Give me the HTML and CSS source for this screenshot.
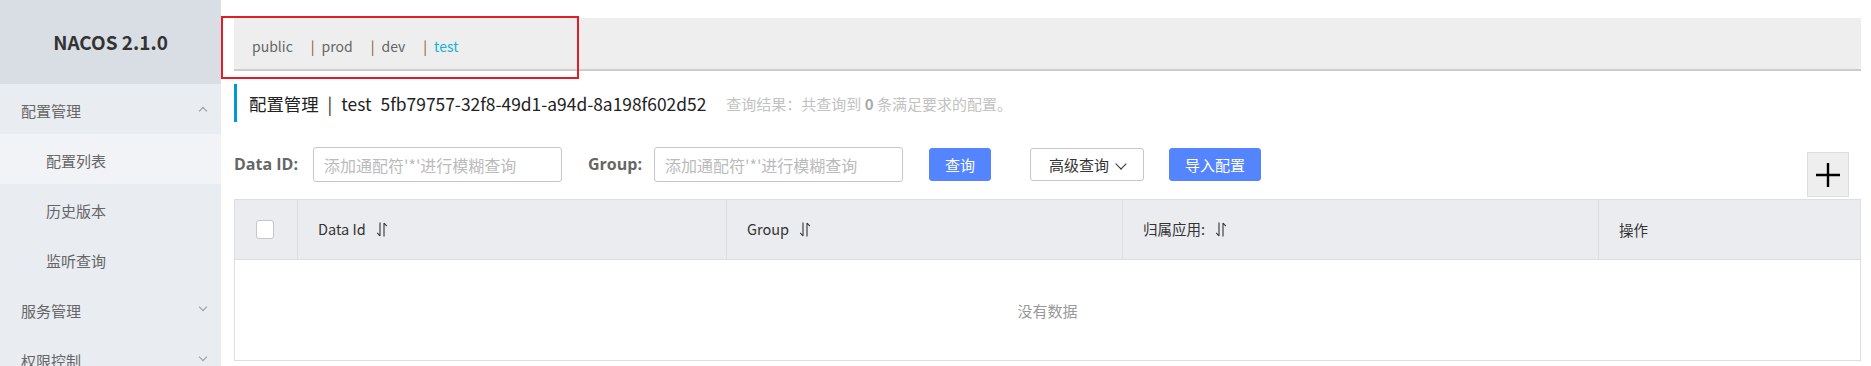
FILE: index.html
```html
<!DOCTYPE html>
<html>

<head>
    <meta charset="utf-8" />
    <title>Nacos 配置列表</title>
    <link rel="stylesheet" href="styles.css">
</head>

<body>
    <div class="page">
        <!-- 左侧菜单 -->
        <div class="side">
            <div class="logo">NACOS 2.1.0</div>
            <ul class="menu">
                <li class="menu_item open">配置管理<i class="arrow up"></i></li>
                <li class="sub_item active">配置列表</li>
                <li class="sub_item">历史版本</li>
                <li class="sub_item">监听查询</li>
                <li class="menu_item">服务管理<i class="arrow"></i></li>
                <li class="menu_item">权限控制<i class="arrow"></i></li>
            </ul>
        </div>

        <div class="main">
            <!-- 命名空间 -->
            <div class="ns_bar">
                <span class="ns">public</span>
                <span class="ns"><b>|</b>prod</span>
                <span class="ns"><b>|</b>dev</span>
                <span class="ns current"><b>|</b>test</span>
            </div>
            <div class="mark"></div>

            <div class="title">
                <span>配置管理</span>
                <span class="sep">|</span>
                <span>test</span>
                <span class="ns_id">5fb79757-32f8-49d1-a94d-8a198f602d52</span>
                <span class="hint">查询结果：共查询到 <strong>0</strong> 条满足要求的配置。</span>
            </div>

            <div class="search">
                <label class="label label_id">Data ID:</label>
                <input class="input" type="text" placeholder="添加通配符'*'进行模糊查询">
                <label class="label label_group">Group:</label>
                <input class="input" type="text" placeholder="添加通配符'*'进行模糊查询">
                <button class="btn primary btn_query">查询</button>
                <button class="btn normal">高级查询<i class="down"></i></button>
                <button class="btn primary">导入配置</button>
                <button class="btn_add">
                    <svg width="26" height="26" viewBox="0 0 26 26">
                        <path d="M13 1v24M1 13h24" stroke="#000" stroke-width="2.4" fill="none" />
                    </svg>
                </button>
            </div>

            <table class="table">
                <thead>
                    <tr>
                        <th class="col_check"><span class="checkbox"></span></th>
                        <th class="col_id">Data Id<i class="sort"></i></th>
                        <th class="col_group">Group<i class="sort"></i></th>
                        <th class="col_app">归属应用:<i class="sort"></i></th>
                        <th>操作</th>
                    </tr>
                </thead>
                <tbody>
                    <tr>
                        <td class="empty" colspan="5">没有数据</td>
                    </tr>
                </tbody>
            </table>
        </div>
    </div>

    <script>
        //排序图标
        let sorts = document.querySelectorAll('.sort')
        for (let i = 0; i < sorts.length; i++) {
            sorts[i].innerHTML = '<svg width="12" height="15" viewBox="0 0 12 15">' +
                '<path d="M4 0.5v13.5M4 14L1.2 10.8M8 14.5V1M8 1l2.8 3.2" stroke="#333" stroke-width="1.1" fill="none"/></svg>'
        }
    </script>
</body>

</html>
```

FILE: styles.css
```css
* {
    margin: 0;
    padding: 0;
    box-sizing: border-box;
}

body {
    font-family: "Noto Sans CJK SC", Roboto, sans-serif;
    color: #333;
    background: #fff;
    width: 1871px;
    height: 366px;
    overflow: hidden;
}

li {
    list-style: none;
}

.page {
    display: flex;
    height: 366px;
}

/* 左侧菜单 */
.side {
    width: 221px;
    flex-shrink: 0;
    background: #e9ecf1;
}

.logo {
    height: 84px;
    line-height: 83px;
    text-align: center;
    background: #d9dee5;
    font-size: 19px;
    font-weight: bold;
    color: #333;
}

.menu_item,
.sub_item {
    height: 50px;
    padding-top: 3px;
    line-height: 47px;
    font-size: 15px;
    color: #666;
    position: relative;
}

.menu_item {
    padding-left: 21px;
}

.sub_item {
    padding-left: 46px;
}

.sub_item.active {
    background: #f1f3f6;
}

.arrow {
    position: absolute;
    right: 15px;
    top: 20px;
    width: 6px;
    height: 6px;
    border-right: 1px solid #999;
    border-bottom: 1px solid #999;
    transform: rotate(45deg);
}

.arrow.up {
    top: 24px;
    transform: rotate(-135deg);
}

/* 主体 */
.main {
    flex: 1;
    padding: 18px 10px 0 13px;
    position: relative;
}

.ns_bar {
    height: 53px;
    background: #eee;
    border-bottom: 2px solid #ccc;
    padding: 5px 0 0 18px;
    display: flex;
    align-items: center;
    font-size: 14px;
    color: #666;
}

.ns {
    margin-right: 18px;
}

.ns b {
    font-weight: normal;
    color: #7a5a30;
    margin-right: 7px;
}

.ns.current {
    color: #1ab1d6;
}

/* 截图标注框 */
.mark {
    position: absolute;
    left: 0;
    top: 16px;
    width: 358px;
    height: 63px;
    border: 2px solid #e31d27;
}

.title {
    margin-top: 13px;
    height: 38px;
    border-left: 3px solid #0099d4;
    padding-left: 12px;
    display: flex;
    align-items: center;
    font-size: 17.4px;
    color: #222;
}

.title .sep {
    margin: 0 9px;
}

.title .ns_id {
    margin-left: 9px;
}

.hint {
    margin-left: 20px;
    font-size: 15px;
    color: #c2c2c2;
}

.hint strong {
    color: #aaa;
}

/* 搜索栏 */
.search {
    height: 52px;
    margin-top: 25px;
    display: flex;
    align-items: flex-start;
}

.label {
    flex-shrink: 0;
    font-family: "Open Sans", "Noto Sans CJK SC", sans-serif;
    font-size: 16px;
    font-weight: bold;
    color: #666;
    line-height: 35px;
}

.label_id {
    width: 79px;
}

.label_group {
    width: 66px;
}

.input {
    flex-shrink: 0;
    width: 249px;
    height: 35px;
    border: 1px solid #c4c6cf;
    border-radius: 3px;
    padding: 0 10px;
    font-size: 16px;
    font-family: inherit;
    margin-right: 26px;
    outline: none;
}

.input::placeholder {
    color: #bbb;
}

.btn {
    flex-shrink: 0;
    height: 33px;
    margin-top: 1px;
    border-radius: 3px;
    font-size: 15px;
    font-family: inherit;
    padding: 0 15px;
    margin-right: 25px;
    cursor: pointer;
}

.btn.primary {
    background: #5584ff;
    border: 1px solid #5584ff;
    color: #fff;
}

.btn_query {
    margin-right: 39px;
}

.btn.normal {
    background: #fff;
    border: 1px solid #c4c6cf;
    color: #333;
    padding: 0 12px;
    width: 114px;
}

.down {
    display: inline-block;
    width: 8px;
    height: 8px;
    margin-left: 8px;
    border-right: 1px solid #333;
    border-bottom: 1px solid #333;
    transform: translateY(-3px) rotate(45deg);
}

.btn_add {
    margin-left: auto;
    margin-right: 12px;
    margin-top: 5px;
    width: 42px;
    height: 45px;
    background: #eee;
    border: 1px solid #ddd;
    display: flex;
    align-items: center;
    justify-content: center;
}

/* 表格 */
.table {
    width: 100%;
    border-collapse: collapse;
    font-size: 14.5px;
}

.table th {
    height: 60px;
    background: #ebecf0;
    border: 1px solid #dcdee3;
    font-weight: normal;
    text-align: left;
    padding-left: 20px;
    color: #333;
}

.table th.col_check {
    width: 63px;
    padding-left: 21px;
}

.col_id {
    width: 429px;
}

.col_group {
    width: 396px;
}

.col_app {
    width: 476px;
}

.checkbox {
    display: block;
    width: 18px;
    height: 19px;
    background: #fff;
    border: 1px solid #c4c6cf;
    border-radius: 3px;
}

.sort {
    display: inline-block;
    margin-left: 10px;
    vertical-align: -2px;
}

.empty {
    height: 101px;
    border: 1px solid #dcdee3;
    text-align: center;
    color: #999;
    font-size: 15px;
}
```
